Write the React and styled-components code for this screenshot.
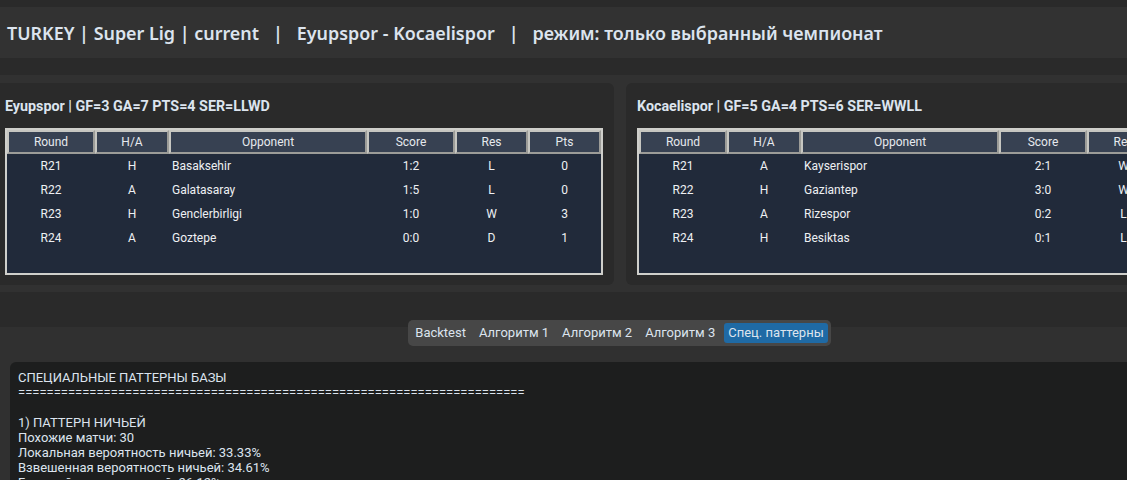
import React from "react";
import styled, { createGlobalStyle } from "styled-components";

const GlobalStyle = createGlobalStyle`
  html, body {
    margin: 0;
    padding: 0;
    background: #2b2b2b;
    overflow: hidden;
  }
  body {
    font-family: Roboto, "Noto Sans", sans-serif;
    color: #dce4ee;
  }
`;

const teams = [
  {
    title: "Eyupspor | GF=3 GA=7 PTS=4 SER=LLWD",
    rows: [
      ["R21", "H", "Basaksehir", "1:2", "L", "0"],
      ["R22", "A", "Galatasaray", "1:5", "L", "0"],
      ["R23", "H", "Genclerbirligi", "1:0", "W", "3"],
      ["R24", "A", "Goztepe", "0:0", "D", "1"],
    ],
  },
  {
    title: "Kocaelispor | GF=5 GA=4 PTS=6 SER=WWLL",
    rows: [
      ["R21", "A", "Kayserispor", "2:1", "W", "3"],
      ["R22", "H", "Gaziantep", "3:0", "W", "3"],
      ["R23", "A", "Rizespor", "0:2", "L", "0"],
      ["R24", "H", "Besiktas", "0:1", "L", "0"],
    ],
  },
];

const columns = ["Round", "H/A", "Opponent", "Score", "Res", "Pts"];
const tabs = ["Backtest", "Алгоритм 1", "Алгоритм 2", "Алгоритм 3", "Спец. паттерны"];

const reportLines = [
  "СПЕЦИАЛЬНЫЕ ПАТТЕРНЫ БАЗЫ",
  "=".repeat(71),
  "",
  "1) ПАТТЕРН НИЧЬЕЙ",
  "Похожие матчи: 30",
  "Локальная вероятность ничьей: 33.33%",
  "Взвешенная вероятность ничьей: 34.61%",
  "Базовый уровень ничьей: 26.12%",
];

const App = () => {
  return (
    <Page>
      <GlobalStyle />
      <Header>
        {"TURKEY | Super Lig | current   |   Eyupspor - Kocaelispor   |   режим: только выбранный чемпионат"}
      </Header>

      <CardsStrip>
        <CardsRow>
          {teams.map((team) => (
            <Card key={team.title}>
              <CardTitle>{team.title}</CardTitle>
              <Table>
                <HeadRow>
                  {columns.map((c) => (
                    <HeadCell key={c}>{c}</HeadCell>
                  ))}
                </HeadRow>
                {team.rows.map((row) => (
                  <Row key={row[0]}>
                    {row.map((v, i) => (
                      <Cell key={i} $left={i === 2}>
                        {v}
                      </Cell>
                    ))}
                  </Row>
                ))}
              </Table>
            </Card>
          ))}
        </CardsRow>
      </CardsStrip>

      <TabView>
        <TabBar>
          {tabs.map((t, i) => (
            <TabButton key={t} $active={i === tabs.length - 1}>
              {t}
            </TabButton>
          ))}
        </TabBar>
        <TabFrame>
          <TextBox>
            {reportLines.map((l, i) => (
              <Line key={i}>{l || "\u00a0"}</Line>
            ))}
          </TextBox>
        </TabFrame>
      </TabView>
    </Page>
  );
};

const Page = styled.div`
  width: 1127px;
  height: 480px;
  overflow: hidden;
  padding-top: 7px;
  box-sizing: border-box;
  background: #2a2a2a;
`;

const Header = styled.div`
  height: 51px;
  background: #323232;
  display: flex;
  align-items: center;
  padding-left: 7px;
  white-space: pre;
  font-family: "Noto Sans", "Open Sans", sans-serif;
  font-weight: 600;
  font-size: 17.92px;
  color: #dce4ee;
`;

const CardsStrip = styled.div`
  margin-top: 17px;
  background: #313131;
  padding: 8px 0 7px;
  overflow: hidden;
`;

const CardsRow = styled.div`
  display: flex;
  gap: 12px;
  margin-left: -6px;
`;

const Card = styled.div`
  flex: 0 0 620px;
  box-sizing: border-box;
  height: 202px;
  background: #2a2a2a;
  border-radius: 6px;
  padding: 15px 11px 11px;
`;

const CardTitle = styled.div`
  font-family: Roboto, sans-serif;
  font-weight: 700;
  font-size: 14.3px;
  line-height: 16px;
  color: #dce4ee;
  margin-bottom: 14px;
`;

const Table = styled.div`
  width: 598px;
  height: 147px;
  box-sizing: border-box;
  border: 2px solid #cfcfcb;
  background: #212a3a;
`;

const grid = `
  display: grid;
  grid-template-columns: 88px 74px 198px 88px 73px 73px;
`;

const HeadRow = styled.div`
  ${grid}
  height: 24px;
  background: #2a2a2a;
`;

const HeadCell = styled.div`
  box-sizing: border-box;
  border: 2px solid #c6c6c1;
  border-right-color: #9c9c98;
  border-bottom-color: #9c9c98;
  background: #374152;
  display: flex;
  align-items: center;
  justify-content: center;
  font-size: 12px;
  color: #e6e9ee;
`;

const Row = styled.div`
  ${grid}
  height: 24px;
`;

const Cell = styled.div`
  display: flex;
  align-items: center;
  justify-content: ${(p) => (p.$left ? "flex-start" : "center")};
  padding-left: ${(p) => (p.$left ? "3px" : "0")};
  font-size: 12px;
  color: #eef0f3;
`;

const TabView = styled.div`
  margin-top: 28px;
  display: flex;
  flex-direction: column;
`;

const TabBar = styled.div`
  align-self: center;
  position: relative;
  z-index: 1;
  margin-left: 112px;
  margin-bottom: -19px;
  display: flex;
  gap: 5px;
  padding: 3px;
  background: #474747;
  border-radius: 5px;
`;

const TabButton = styled.div`
  padding: 0 4px;
  height: 20px;
  line-height: 20px;
  border-radius: 3px;
  font-size: 13px;
  color: #dce4ee;
  background: ${(p) => (p.$active ? "#1f6aa5" : "transparent")};
`;

const TabFrame = styled.div`
  background: #303030;
  padding: 35px 0 0 10px;
  height: 200px;
`;

const TextBox = styled.div`
  background: #1d1e1e;
  border-radius: 6px 0 0 0;
  padding: 8px 8px;
  height: 200px;
`;

const Line = styled.div`
  font-family: Roboto, sans-serif;
  font-size: 13px;
  line-height: 15px;
  color: #dce4ee;
  white-space: pre;
`;

export default App;
